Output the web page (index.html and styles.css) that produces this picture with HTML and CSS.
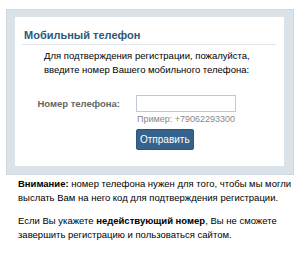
FILE: index.html
```html
<!DOCTYPE html>
<html lang="ru">
<head>
    <meta charset="UTF-8">
    <title>Мобильный телефон</title>
    <link rel="stylesheet" href="styles.css">
</head>
<body>
    <div class="panel">
        <div class="box">
            <h2>Мобильный телефон</h2>
            <p class="intro">Для подтверждения регистрации, пожалуйста,<br>введите номер Вашего мобильного телефона:</p>
            <div class="row">
                <label for="phone">Номер телефона:</label>
                <div class="field">
                    <input type="text" id="phone">
                    <div class="hint">Пример: +79062293300</div>
                    <button>Отправить</button>
                </div>
            </div>
        </div>
    </div>
    <div class="notes">
        <p><b>Внимание:</b> номер телефона нужен для того, чтобы мы могли<br>выслать Вам на него код для подтверждения регистрации.</p>
        <p>Если Вы укажете <b>недействующий номер</b>, Вы не сможете<br>завершить регистрацию и пользоваться сайтом.</p>
    </div>
</body>
</html>
```

FILE: styles.css
```css
body {
    margin: 0;
    background: #fff;
    font-family: "Liberation Sans", Arial, sans-serif;
    font-size: 9.5px;
    color: #000;
}
.panel {
    margin: 9px 6px 0 6px;
    background: #dae2ea;
    border: 1px solid #cfd8e1;
    padding: 7px 9px 8px 8px;
}
.box {
    background: #fff;
    padding: 12px 8px 16px 7px;
}
h2 {
    margin: 0;
    font-size: 11px;
    line-height: 13px;
    color: #2b587a;
    padding: 0 0 2px 2px;
    border-bottom: 1px solid #dee4ea;
}
.intro {
    margin: 4px 0 0 22px;
    line-height: 14px;
    white-space: nowrap;
}
.row {
    display: flex;
    margin-top: 18px;
}
label {
    width: 114px;
    padding: 3px 16px 0 0;
    box-sizing: border-box;
    text-align: right;
    font-weight: bold;
    color: #666;
}
.field {
    display: flex;
    flex-direction: column;
    align-items: flex-start;
}
input {
    width: 100px;
    height: 17px;
    box-sizing: border-box;
    border: 1px solid #c0cad5;
    margin: 0;
}
.hint {
    font-size: 9px;
    line-height: 11px;
    color: #888;
    margin: 2px 0 0 1px;
}
button {
    margin-top: 4px;
    background: #36638e;
    color: #fff;
    border: 1px solid #2b587a;
    border-radius: 2px;
    font-family: inherit;
    font-size: 10px;
    line-height: 11px;
    padding: 4px 3px;
}
.notes {
    padding: 0 18px;
    margin-top: 2px;
    white-space: nowrap;
}
.notes p {
    margin: 0 0 9px;
    line-height: 14px;
}
```
